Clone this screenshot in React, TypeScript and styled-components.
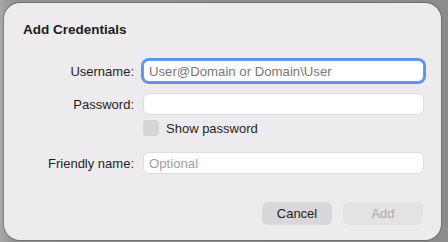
import React from 'react';
import styled, { createGlobalStyle } from 'styled-components';

const GlobalStyle = createGlobalStyle`
  html, body {
    margin: 0;
    padding: 0;
    background: linear-gradient(90deg, #a6a6a6 0px, #929292 14px, #8c8c8c 100%);
    font-family: "Liberation Sans", Arial, sans-serif;
    -webkit-font-smoothing: antialiased;
  }
  #root {
    width: 448px;
    height: 242px;
    overflow: hidden;
  }
`;

const Dialog = styled.div`
  box-sizing: border-box;
  width: 437px;
  height: 237px;
  margin: 3px 0 0 4px;
  padding: 19px 0 0 19px;
  background: #eeebee;
  border-radius: 16px;
  box-shadow: 0 0 0 1px rgba(60, 60, 60, 0.35);
  display: flex;
  flex-direction: column;
`;

const Title = styled.h1`
  margin: 0 0 22px;
  font-size: 13.5px;
  line-height: 16px;
  font-weight: 700;
  color: #1c1c1c;
`;

const Row = styled.div<{ $gap?: number; $h?: number }>`
  display: grid;
  grid-template-columns: 111px 281px;
  column-gap: 9px;
  align-items: center;
  height: ${(p) => p.$h ?? 22}px;
  margin-top: ${(p) => p.$gap ?? 0}px;
`;

const Label = styled.label`
  text-align: right;
  font-size: 13px;
  color: #1f1f1f;
`;

const Field = styled.input<{ $focused?: boolean; $dim?: boolean }>`
  box-sizing: border-box;
  width: 281px;
  height: 22px;
  margin: 0;
  padding: 0 5px;
  font-family: inherit;
  font-size: 13.2px;
  color: #1f1f1f;
  background: #ffffff;
  border: 1px solid ${(p) => (p.$focused ? '#6b9af0' : '#dedcde')};
  border-radius: 6px;
  outline: none;
  box-shadow: ${(p) => (p.$focused ? '0 0 0 2px #5e91ee' : 'none')};

  &::placeholder {
    color: ${(p) => (p.$dim ? '#a09fa0' : '#787778')};
  }
`;

const CheckWrap = styled.div`
  grid-column: 2;
  display: flex;
  align-items: center;
  gap: 7px;
  font-size: 13px;
  color: #1f1f1f;
`;

const Box = styled.span`
  width: 16px;
  height: 16px;
  border-radius: 4px;
  background: #d6d4d6;
`;

const Footer = styled.div`
  display: flex;
  justify-content: flex-end;
  gap: 11px;
  margin-top: 28px;
  padding-right: 18px;
`;

const Button = styled.button<{ $disabled?: boolean; $w: number }>`
  width: ${(p) => p.$w}px;
  height: 23px;
  border: none;
  border-radius: 6px;
  font-family: inherit;
  font-size: 13px;
  padding: 0;
  background: ${(p) => (p.$disabled ? '#e4e2e4' : '#d9d7d9')};
  color: ${(p) => (p.$disabled ? '#acaaac' : '#1c1c1c')};
`;

export default function App() {
  return (
    <>
      <GlobalStyle />
      <Dialog>
        <Title>Add Credentials</Title>
        <Row>
          <Label>Username:</Label>
          <Field $focused placeholder="User@Domain or Domain\User" />
        </Row>
        <Row $gap={11}>
          <Label>Password:</Label>
          <Field type="password" />
        </Row>
        <Row $gap={5} $h={16}>
          <CheckWrap>
            <Box />
            Show password
          </CheckWrap>
        </Row>
        <Row $gap={16}>
          <Label>Friendly name:</Label>
          <Field $dim placeholder="Optional" />
        </Row>
        <Footer>
          <Button $w={70}>Cancel</Button>
          <Button $w={80} $disabled>Add</Button>
        </Footer>
      </Dialog>
    </>
  );
}
